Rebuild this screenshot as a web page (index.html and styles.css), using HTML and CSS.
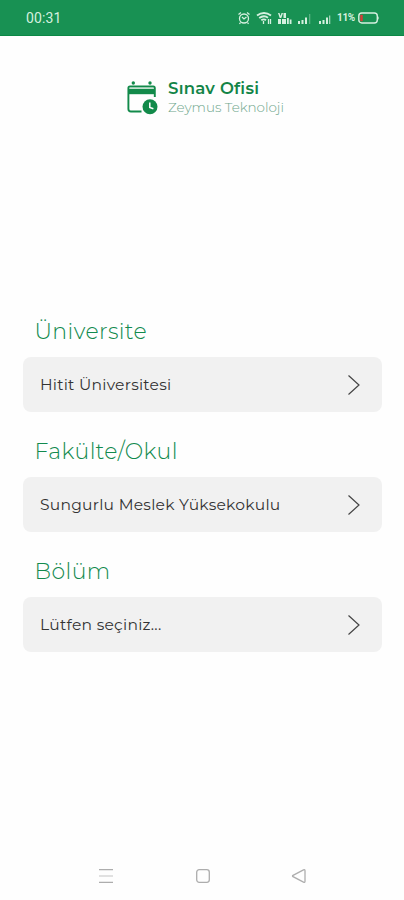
FILE: index.html
```html
<!DOCTYPE html>
<html lang="tr">
<head>
<meta charset="utf-8">
<title>Sınav Ofisi</title>
<link rel="stylesheet" href="styles.css">
</head>
<body>
<header class="status">
  <span class="clock">00:31</span>
  <div class="indicators">
    <svg class="alarm" width="14" height="14" viewBox="0 0 14 14" fill="none" stroke="currentColor" stroke-width="1.3"><circle cx="7" cy="7.5" r="4.5"/><path d="M1.5 3.5 4 1.5M12.500 3.500 10 1.500M5 6l2 2 2.500-2M3.500 11.500l-1 1.500M10.500 11.500l1 1.500"/></svg>
    <svg class="wifi" width="16" height="14" viewBox="0 0 16 14" fill="none" stroke="currentColor" stroke-width="1.9"><path d="M1 4.500Q8-.5 15 4.500M3.200 7Q8 3.500 12 6.700M5.300 9.300Q8 7.500 10 9.300"/><path d="M7.500 10v3M12.500 8v5M14.500 8v5" stroke-width="1.300"/></svg>
    <svg class="network" width="15" height="14" viewBox="0 0 15 14" fill="currentColor"><path d="M1 2h1.500l1 3 1-3H6L4.300 7H2.700zM6.500 2H9v5H6.500zM1 8h3v5H1zM5 8h4v5H5zM10 7h1.800v6H10zM12.700 8.500h1.800V13h-1.800z"/></svg>
    <svg class="signal" width="14" height="14" viewBox="0 0 14 14" fill="currentColor"><path d="M1 10h2v3H1zM4.500 9h2v4h-2zM8 6.500h2V13H8z"/><path d="M12 3h1.300v10H12z" opacity=".35"/></svg>
    <svg class="signal second" width="14" height="14" viewBox="0 0 14 14" fill="currentColor"><path d="M1 10h2v3H1zM4.500 9h2v4h-2zM8 6.500h2V13H8z"/><path d="M11 4.500h1.300V13H11z" opacity=".7"/></svg>
    <span class="percent">11%</span>
    <svg class="battery" width="22" height="12" viewBox="0 0 22 12"><rect x=".8" y="1" width="18.500" height="10" rx="3" fill="none" stroke="currentColor" stroke-width="1.400"/><path d="M20.300 4q1.700 2 0 4z" fill="currentColor"/><rect x="2.300" y="2.700" width="2.400" height="6.600" rx=".6" fill="#d83a36"/></svg>
  </div>
</header>
<div class="brand">
  <svg width="32" height="35" viewBox="0 0 32 35"><path d="M1.400 13V8.200Q1.400 6.500 3 6.500h23.200Q27.800 6.500 27.800 8.200V17M1.400 12v17q0 2.500 2.600 2.500h10.500" fill="none" stroke="#128a4a" stroke-width="1.900"/><path d="M1 8.800h27v5.400H1z" fill="#128a4a"/><path d="M2.500 7.900h24" stroke="#a9d6be" stroke-width=".8"/><circle cx="6.300" cy="3" r="1.700" fill="#128a4a"/><circle cx="23" cy="3" r="1.700" fill="#128a4a"/><circle cx="23" cy="26.800" r="7.500" fill="#128a4a"/><path d="M22.800 22.500v5l3.600 1.200" fill="none" stroke="#fff" stroke-width="1.500"/></svg>
  <div class="names">
    <h1>Sınav Ofisi</h1>
    <p>Zeymus Teknoloji</p>
  </div>
</div>
<main>
  <section>
    <h2>Üniversite</h2>
    <div class="field"><span>Hitit Üniversitesi</span><svg width="14" height="22" viewBox="0 0 14 22"><path d="M1.500 1.500 12 11 1.500 20.500"/></svg></div>
  </section>
  <section>
    <h2>Fakülte/Okul</h2>
    <div class="field"><span>Sungurlu Meslek Yüksekokulu</span><svg width="14" height="22" viewBox="0 0 14 22"><path d="M1.500 1.500 12 11 1.500 20.500"/></svg></div>
  </section>
  <section>
    <h2>Bölüm</h2>
    <div class="field"><span>Lütfen seçiniz...</span><svg width="14" height="22" viewBox="0 0 14 22"><path d="M1.500 1.500 12 11 1.500 20.500"/></svg></div>
  </section>
</main>
<nav>
  <svg width="16" height="16" viewBox="0 0 16 16"><path d="M1 1.700h14M1 14.300h14"/><path d="M1 8h14" opacity=".55"/></svg>
  <svg width="16" height="16" viewBox="0 0 16 16"><rect x="1.700" y="1.700" width="12.600" height="12.600" rx="2.500"/></svg>
  <svg width="16" height="16" viewBox="0 0 16 16"><path d="M2 7.300 12.500 1.800q1.500-.6 1.500 1v10.400q0 1.600-1.500 1L2 8.700q-1-.7 0-1.400z"/></svg>
</nav>
</body>
</html>
```
FILE: styles.css
```css
* { box-sizing: border-box; margin: 0; padding: 0; }
body {
  width: 404px;
  height: 900px;
  display: flex;
  flex-direction: column;
  overflow: hidden;
  background: #fefefe;
  font-family: Montserrat, Inter, sans-serif;
}
svg { display: block; flex: none; }
.status {
  height: 36px;
  padding: 0 24px 0 26px;
  display: flex;
  align-items: center;
  justify-content: space-between;
  background: #189153;
  border-bottom: 1px solid #0b8845;
  color: #d5f0df;
}
.clock { font: 400 14px/20px Roboto, sans-serif; letter-spacing: .1px; }
.indicators { display: flex; align-items: center; margin-top: 1px; }
.wifi { margin-left: 5px; }
.network { margin-left: 5px; }
.signal { margin-left: 5px; }
.second { margin-left: 7px; }
.percent { margin-left: 5px; width: 19px; font: 700 10px/14px Roboto, sans-serif; letter-spacing: -.3px; }
.battery { margin-left: 2px; }
.brand {
  display: flex;
  gap: 9px;
  margin: 44px 0 0 127px;
  height: 40px;
}
.names { white-space: nowrap; margin-top: -3px; }
.brand h1 { font-size: 16.5px; line-height: 22px; font-weight: 600; color: #128446; letter-spacing: .25px; }
.brand p { font-size: 13.5px; line-height: 17px; font-weight: 300; color: #6fa78c; }
main {
  margin: 194px 22px 0 23px;
  display: flex;
  flex-direction: column;
  gap: 22px;
}
section { height: 98px; display: flex; flex-direction: column; justify-content: space-between; }
h2 { padding: 1px 0 0 11.5px; font-size: 22px; line-height: 34px; font-weight: 300; color: #128a4e; white-space: nowrap; letter-spacing: .4px; }
.field {
  height: 55px;
  padding: 0 21px 0 17px;
  display: flex;
  align-items: center;
  justify-content: space-between;
  border-radius: 8px;
  background: #f1f1f1;
  color: #333;
  font-size: 15.5px;
  letter-spacing: .27px;
  white-space: nowrap;
}
.field svg { fill: none; stroke: #444; stroke-width: 1.200; }
nav {
  margin: auto 97px 16px 98px;
  display: flex;
  justify-content: space-between;
}
nav svg { fill: none; stroke: #adadad; stroke-width: 1.300; }
```
